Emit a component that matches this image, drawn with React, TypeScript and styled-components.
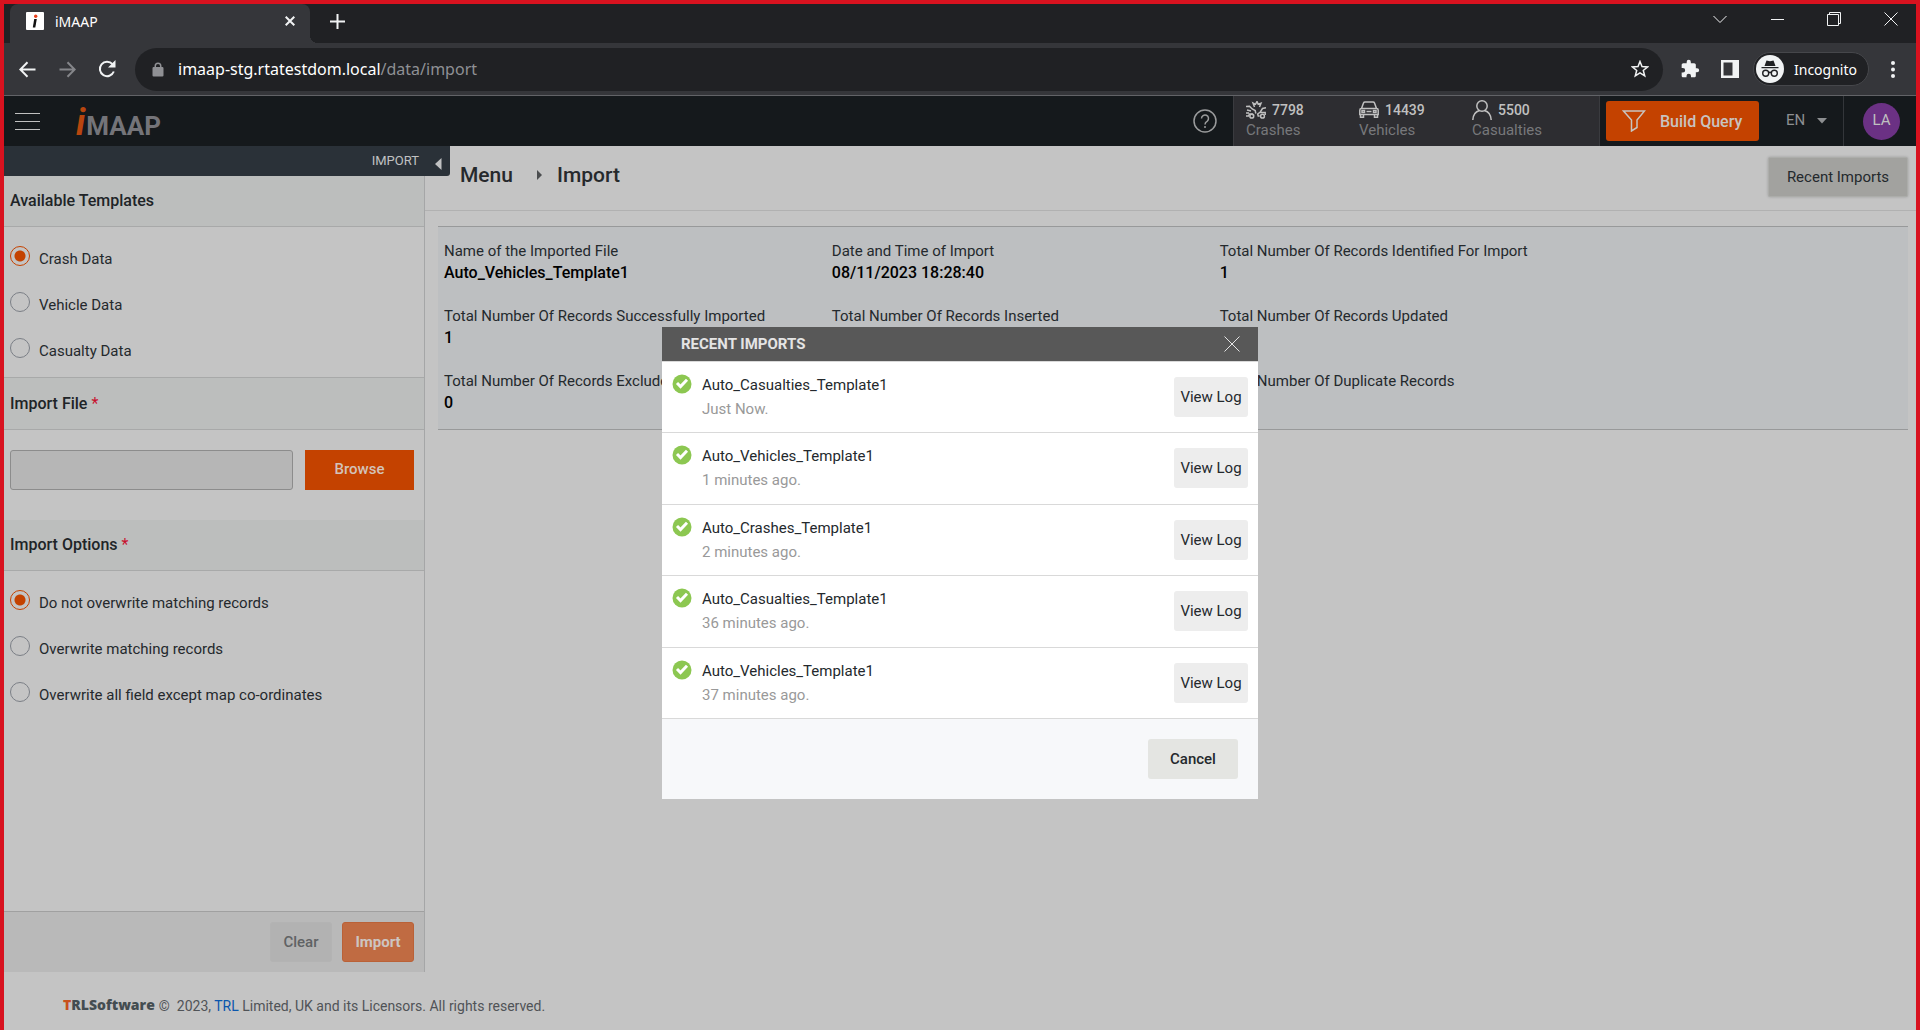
import React, { useState } from "react";
import styled, { createGlobalStyle } from "styled-components";

const GlobalStyle = createGlobalStyle`
  *, *::before, *::after { box-sizing: border-box; }
  body { margin: 0; background: #c4c4c4; }
  button, input, select { font: inherit; }
`;

const appFont = `Roboto, "Liberation Sans", sans-serif`;
const chromeFont = `"Noto Sans", "Open Sans", sans-serif`;

const Frame = styled.div`
  display: flex;
  flex-direction: column;
  height: 100vh;
  border: 4px solid #d8121f;
  border-bottom: 0;
  overflow: hidden;
  font-family: ${appFont};
  font-size: 15px;
  color: #24292d;
`;

/* ---------- Browser window ---------- */

const TabStrip = styled.div`
  display: flex;
  align-items: flex-start;
  height: 39px;
  padding-left: 6px;
  background: #202124;
  color: #fff;
  font-family: ${chromeFont};
`;

const Tab = styled.div`
  position: relative;
  display: flex;
  align-items: center;
  width: 300px;
  height: 39px;
  padding: 0 12px 5px 16px;
  border-radius: 8px 8px 0 0;
  background: #35363a;
  font-size: 14px;
  &::after {
    content: "";
    position: absolute;
    left: 100%;
    bottom: 0;
    width: 8px;
    height: 8px;
    background: radial-gradient(circle at 100% 0, transparent 8px, #35363a 8px);
  }
`;

const Favicon = styled.svg`
  width: 18px;
  height: 18px;
  margin-right: 11px;
`;

const TabTitle = styled.span`
  flex: 1;
`;

const ChromeButton = styled.button<{ $w?: number; $h?: number; $dim?: boolean }>`
  display: flex;
  align-items: center;
  justify-content: center;
  flex: none;
  width: ${(p) => p.$w ?? 40}px;
  height: ${(p) => p.$h ?? 40}px;
  padding: 0;
  border: 0;
  background: none;
  color: ${(p) => (p.$dim ? "#85868a" : "#f1f3f4")};
`;

const WindowControls = styled.div`
  display: flex;
  gap: 7px;
  margin-left: auto;
`;

const Toolbar = styled.div`
  display: flex;
  align-items: center;
  height: 53px;
  padding: 0 3px;
  border-bottom: 1px solid #626367;
  background: #35363a;
  color: #fff;
  font-family: ${chromeFont};
`;

const AddressBar = styled.div`
  display: flex;
  flex: 1;
  align-items: center;
  height: 43px;
  margin: 0 7px 0 8px;
  padding-left: 17px;
  border-radius: 22px;
  background: #202124;
  color: #8f9094;
  font-size: 16px;
`;

const Url = styled.span`
  flex: 1;
  padding-left: 14px;
  strong {
    color: #fff;
    font-weight: 400;
  }
`;

const IncognitoChip = styled.div`
  display: flex;
  align-items: center;
  gap: 10px;
  height: 34px;
  margin: 0 4px 0 3px;
  padding: 0 11px 0 2px;
  border: 1px solid #46474b;
  border-radius: 17px;
  background: #202124;
  font-size: 14px;
`;

/* ---------- Application header ---------- */

const Viewport = styled.div`
  position: relative;
  display: flex;
  flex: 1;
  flex-direction: column;
  min-height: 0;
`;

const AppHeader = styled.header`
  display: flex;
  flex: none;
  align-items: center;
  height: 50px;
  background: #15191c;
  color: #c0c0c0;
`;

const PlainButton = styled.button`
  display: flex;
  padding: 0;
  border: 0;
  background: none;
  color: inherit;
`;

const Hamburger = styled(PlainButton)`
  margin: 0 36px 0 11px;
`;

const Logo = styled.a`
  display: flex;
  align-items: baseline;
  padding-top: 6px;
  color: #747479;
  font-size: 26px;
  font-weight: 700;
  line-height: 50px;
  text-decoration: none;
  em {
    color: #b8460f;
    font-size: 36px;
    margin-right: 1px;
  }
`;

const HelpButton = styled(PlainButton)`
  margin: 0 16px 0 auto;
  color: #9a9b9c;
`;

const Stats = styled.div`
  display: flex;
  gap: 12px;
  height: 50px;
  padding: 4px 26px 0 12px;
  border-left: 1px solid #3a3b3f;
  border-right: 1px solid #3a3b3f;
  background: #2d2d31;
`;

const Stat = styled.div`
  width: 101px;
  color: #77787b;
  line-height: 20px;
`;

const StatValue = styled.div`
  display: flex;
  align-items: center;
  gap: 6px;
  height: 20px;
  color: #c0c0c0;
  font-size: 14px;
  font-weight: 500;
`;

const QueryButton = styled.button`
  display: flex;
  align-items: center;
  gap: 14px;
  width: 153px;
  height: 40px;
  margin: 0 27px 0 6px;
  padding: 0 0 0 16px;
  border: 0;
  border-radius: 3px;
  background: #c44200;
  color: #c8c4c0;
  font-size: 16px;
  font-weight: 500;
`;

const LanguagePicker = styled.label`
  display: flex;
  align-items: center;
  height: 50px;
  width: 58px;
  border-right: 1px solid #33363a;
  color: #8d8f91;
  select {
    width: 31px;
    padding: 0 0 2px;
    border: 0;
    appearance: none;
    background: none;
    color: inherit;
    font-size: 15px;
  }
`;

const Avatar = styled.button`
  width: 37px;
  height: 37px;
  margin: 0 16px 0 19px;
  padding: 0 0 2px;
  border: 0;
  border-radius: 50%;
  background: #6b3184;
  color: #c0c0c0;
  font-size: 15px;
`;

/* ---------- Sidebar ---------- */

const Body = styled.div`
  display: flex;
  flex: 1;
  min-height: 0;
`;

const Sidebar = styled.aside`
  display: flex;
  flex: none;
  flex-direction: column;
  width: 421px;
  border-right: 1px solid #a5a6a7;
`;

const SidebarTab = styled.div`
  display: flex;
  flex: none;
  justify-content: flex-end;
  gap: 16px;
  z-index: 1;
  width: calc(100% + 26px);
  height: 30px;
  padding-right: 8px;
  border-radius: 0 0 3px 0;
  background: #2a3138;
  color: #c0c1c2;
  font-size: 13px;
  line-height: 30px;
  button {
    padding-top: 12px;
  }
`;

const SectionTitle = styled.h2<{ $topRule?: boolean }>`
  flex: none;
  margin: 0;
  padding: ${(p) => (p.$topRule ? 13 : 12)}px 6px 12px;
  border-top: ${(p) => (p.$topRule ? "1px solid #a8a9a9" : "0")};
  border-bottom: 1px solid #a8a9a9;
  background: #bcbebd;
  color: #202427;
  font-size: 16px;
  font-weight: 500;
  line-height: 26px;
  span {
    color: #c8102e;
    font-weight: 400;
  }
`;

const RadioGroup = styled.div`
  display: flex;
  flex-direction: column;
  gap: 20px;
  padding: 19px 6px 13px;
`;

const RadioRow = styled.label`
  display: flex;
  align-items: flex-start;
  gap: 9px;
  line-height: 26px;
  input {
    width: 20px;
    height: 20px;
    margin: 0;
    appearance: none;
    border: 1px solid #7b7f86;
    border-radius: 50%;
  }
  input:checked {
    border-color: #c44200;
    background: radial-gradient(circle, #c44200 5px, transparent 6px);
  }
`;

const FileRow = styled.div`
  display: flex;
  gap: 12px;
  padding: 20px 10px 30px 6px;
  input {
    flex: 1;
    min-width: 0;
    height: 40px;
    border: 1px solid #8c8c8c;
    border-radius: 3px;
    background: #b6b6b6;
  }
`;

const BrowseButton = styled.button`
  width: 109px;
  height: 40px;
  padding: 0 0 3px;
  border: 0;
  background: #c44200;
  color: #d3c2b9;
  font-weight: 500;
`;

const SidebarActions = styled.div`
  display: flex;
  justify-content: flex-end;
  gap: 10px;
  margin-top: auto;
  padding: 10px;
  border-top: 1px solid #a0a0a0;
  background: #b9b9b9;
`;

const ActionButton = styled.button<{ $primary?: boolean }>`
  width: ${(p) => (p.$primary ? 72 : 62)}px;
  height: 40px;
  border: 1px solid ${(p) => (p.$primary ? "#ba6137" : "#b3b3b3")};
  border-radius: 3px;
  background: ${(p) => (p.$primary ? "#c06b42" : "#b2b2b2")};
  color: ${(p) => (p.$primary ? "#cdc5c1" : "#606264")};
  font-weight: ${(p) => (p.$primary ? 700 : 500)};
  padding: 0;
`;

/* ---------- Content ---------- */

const Main = styled.main`
  flex: 1;
  min-width: 0;
`;

const PageHead = styled.div`
  display: flex;
  align-items: flex-start;
  justify-content: space-between;
  padding: 11px 8px 13px 35px;
  border-bottom: 1px solid #b1b1b1;
`;

const Breadcrumb = styled.nav`
  display: flex;
  align-items: center;
  color: #26292c;
  font-size: 21px;
  font-weight: 500;
  line-height: 36px;
  svg {
    margin: 0 15px 0 24px;
    color: #4b4d4f;
  }
`;

const RecentButton = styled.button`
  width: 140px;
  height: 40px;
  padding: 0;
  border: 1px solid #acadaa;
  border-radius: 2px;
  background: #a2a29f;
  box-shadow: 0 0 3px rgba(0, 0, 0, 0.2);
  color: #24292d;
`;

const Summary = styled.dl`
  display: grid;
  grid-template-columns: 26.6% 26.6% 1fr;
  row-gap: 21px;
  margin: 15px 8px 0 13px;
  padding: 13px 6px 15px;
  border-top: 1px solid #98999a;
  border-bottom: 1px solid #98999a;
  background: #bdbfc1;
  line-height: 22px;
  dd {
    min-height: 22px;
    margin: 0;
    color: #000;
    font-size: 16px;
    font-weight: 500;
  }
`;

const Footer = styled.footer`
  display: flex;
  flex: none;
  align-items: center;
  gap: 4px;
  height: 58px;
  padding: 10px 0 0 59px;
  color: #505357;
  font-size: 14px;
  a {
    color: #0b56ad;
    text-decoration: none;
  }
`;

const FooterLogo = styled.span`
  color: #444d51;
  font-family: "Open Sans", sans-serif;
  font-size: 14px;
  font-weight: 800;
  line-height: 24px;
  padding-bottom: 2px;
  span {
    color: #c8501c;
  }
`;

/* ---------- Recent imports dialog ---------- */

const Backdrop = styled.div`
  position: absolute;
  inset: 0;
  z-index: 2;
  display: flex;
  align-items: center;
  justify-content: center;
`;

const Dialog = styled.section`
  width: 596px;
  background: #fff;
`;

const DialogHead = styled.header`
  display: flex;
  align-items: center;
  justify-content: space-between;
  height: 34px;
  padding: 0 18px 0 19px;
  background: #585858;
  color: #e4e4e4;
  h1 {
    margin: 0;
    font-size: 15px;
    font-weight: 700;
  }
`;

const ImportList = styled.ul`
  display: grid;
  grid-auto-rows: 1fr;
  height: 357px;
  margin: 0;
  padding: 0;
  list-style: none;
`;

const ImportItem = styled.li`
  display: flex;
  align-items: flex-start;
  padding: 11px 10px 0;
  border-top: 1px solid #d9d9d9;
  svg {
    margin: 1px 10px 0 0;
  }
  button {
    margin-top: 4px;
  }
`;

const ImportText = styled.div`
  flex: 1;
  line-height: 24px;
  p {
    margin: 0;
  }
  p + p {
    color: #999;
  }
`;

const DialogButton = styled.button<{ $strong?: boolean }>`
  width: ${(p) => (p.$strong ? 90 : 74)}px;
  height: 40px;
  padding: 0;
  border: 0;
  border-radius: 3px;
  background: ${(p) => (p.$strong ? "#e4e5e2" : "#ededed")};
  color: #24292d;
  font-weight: ${(p) => (p.$strong ? 500 : 400)};
`;

const DialogFoot = styled.footer`
  display: flex;
  justify-content: flex-end;
  padding: 20px;
  border-top: 1px solid #d9d9d9;
  background: #f7f8fa;
`;

/* ---------- Icons ---------- */

type StrokeProps = { w: number; h?: number; box?: string; sw?: number; children: React.ReactNode };

const Stroke = ({ w, h = w, box, sw = 1, children }: StrokeProps) => (
  <svg
    width={w}
    height={h}
    viewBox={box ?? `0 0 ${w} ${h}`}
    fill="none"
    stroke="currentColor"
    strokeWidth={sw}
    aria-hidden="true"
  >
    {children}
  </svg>
);

const Solid = ({ w, h = w, box, children }: StrokeProps) => (
  <svg width={w} height={h} viewBox={box ?? `0 0 ${w} ${h}`} fill="currentColor" aria-hidden="true">
    {children}
  </svg>
);

const CrashIcon = () => (
  <Stroke w={20} h={18} sw={1.5}>
    <path d="M8.500 6L7 2l2.500 1.300L11 .5l1.200 2.700L15 2.200 13.500 6M0 5.500l3.500-.3 2.700 2.800 3 1.500.6 3M1 9l4 1M0 12h3M0 15h2.500l1-2h3l1.500 1.500M20 6.800l-3.500.7-2.200 3.500-2.600 2 .5 2h1.500M14 11.500h5.200v2.500" />
    <circle cx="5.800" cy="15.200" r="1.900" />
    <circle cx="16.500" cy="15.200" r="1.900" />
  </Stroke>
);

const CarIcon = () => (
  <Stroke w={20} h={18} sw={1.5}>
    <path d="M2.500 7.500L4.500 2q.4-1 1.500-1h8q1.100 0 1.500 1l2 5.500M2.500 7.500h15q1.700 0 1.700 1.700v4.300H.8V9.200q0-1.700 1.700-1.700zM1.500 13.500v2.800h3v-2.800M15.500 13.500v2.800h3v-2.800M7.500 10.500h5" />
    <rect x="3" y="9.500" width="2.500" height="2" />
    <rect x="14.500" y="9.500" width="2.500" height="2" />
  </Stroke>
);

const PersonIcon = () => (
  <Stroke w={20} h={20} sw={1.5}>
    <circle cx="10" cy="6" r="5.200" />
    <path d="M.8 20c.3-5 3-8.500 6.700-9.500M19.200 20c-.3-5-3-8.500-6.700-9.500" />
  </Stroke>
);

const CheckIcon = () => (
  <svg width="20" height="20" viewBox="0 0 20 20" aria-hidden="true">
    <circle cx="10" cy="10" r="9.500" fill="#8cc751" />
    <path d="M5 9l3.500 3.500L15 5.800" fill="none" stroke="#fff" strokeWidth="3" />
  </svg>
);

/* ---------- Data ---------- */

const templates = ["Crash Data", "Vehicle Data", "Casualty Data"];
const overwriteModes = [
  "Do not overwrite matching records",
  "Overwrite matching records",
  "Overwrite all field except map co-ordinates",
];

const stats = [
  { label: "Crashes", value: "7798", icon: <CrashIcon /> },
  { label: "Vehicles", value: "14439", icon: <CarIcon /> },
  { label: "Casualties", value: "5500", icon: <PersonIcon /> },
];

const summary = [
  ["Name of the Imported File", "Auto_Vehicles_Template1"],
  ["Date and Time of Import", "08/11/2023 18:28:40"],
  ["Total Number Of Records Identified For Import", "1"],
  ["Total Number Of Records Successfully Imported", "1"],
  ["Total Number Of Records Inserted", ""],
  ["Total Number Of Records Updated", ""],
  ["Total Number Of Records Excluded", "0"],
  ["", ""],
  ["Total Number Of Duplicate Records", ""],
];

const recent = [
  ["Auto_Casualties_Template1", "Just Now."],
  ["Auto_Vehicles_Template1", "1 minutes ago."],
  ["Auto_Crashes_Template1", "2 minutes ago."],
  ["Auto_Casualties_Template1", "36 minutes ago."],
  ["Auto_Vehicles_Template1", "37 minutes ago."],
];

/* ---------- Page ---------- */

const Browser = () => (
  <>
    <TabStrip>
      <Tab>
        <Favicon viewBox="0 0 18 18" aria-hidden="true">
          <rect width="18" height="18" rx="1" fill="#fff" />
          <circle cx="9.700" cy="4.200" r="1.700" fill="#e8401c" />
          <path d="M8.200 7h2.600L9.300 15.500H6.800z" fill="#111" />
        </Favicon>
        <TabTitle>iMAAP</TabTitle>
        <ChromeButton $w={16} $h={16} aria-label="Close tab">
          <Stroke w={10} sw={2}>
            <path d="M.7.7l8.600 8.600M9.300.7L.7 9.300" />
          </Stroke>
        </ChromeButton>
      </Tab>
      <ChromeButton $w={55} $h={34} aria-label="New tab">
        <Stroke w={15} sw={2}>
          <path d="M7.500 0v15M0 7.500h15" />
        </Stroke>
      </ChromeButton>
      <WindowControls>
        <ChromeButton $w={50} $h={30} aria-label="Search tabs">
          <Stroke w={14} h={9}>
            <path d="M.5 1L7 7.500 13.500 1" />
          </Stroke>
        </ChromeButton>
        <ChromeButton $w={50} $h={30} aria-label="Minimize">
          <Stroke w={13} h={1}>
            <path d="M0 .5h13" />
          </Stroke>
        </ChromeButton>
        <ChromeButton $w={50} $h={30} aria-label="Restore">
          <Stroke w={14}>
            <path d="M.5 2.500h11v11H.5zM2.500 2.500v-2h11v11h-2" />
          </Stroke>
        </ChromeButton>
        <ChromeButton $w={50} $h={30} aria-label="Close window">
          <Stroke w={14}>
            <path d="M.5.5l13 13M13.500.5l-13 13" />
          </Stroke>
        </ChromeButton>
      </WindowControls>
    </TabStrip>
    <Toolbar>
      <ChromeButton aria-label="Back">
        <Stroke w={17} sw={2}>
          <path d="M16.500 8.500H1.500M8.500 1.200L1.300 8.500l7.200 7.300" />
        </Stroke>
      </ChromeButton>
      <ChromeButton $dim aria-label="Forward">
        <Stroke w={17} sw={2}>
          <path d="M.5 8.500h15M8.500 1.200l7.200 7.300-7.200 7.300" />
        </Stroke>
      </ChromeButton>
      <ChromeButton aria-label="Reload">
        <Stroke w={18} sw={2}>
          <path d="M15.800 11.500A7.200 7.200 0 1 1 14.500 4.200" />
          <path d="M17.500 0v7.500H10z" fill="currentColor" stroke="none" />
        </Stroke>
      </ChromeButton>
      <AddressBar>
        <Solid w={12} h={15}>
          <path d="M2.500 5V4a3.500 3.500 0 0 1 7 0v1h.8q1.200 0 1.200 1.200v7.300q0 1-1.200 1H1.700q-1.200 0-1.200-1V6.200Q.5 5 1.700 5zM4 5h4V4a2 2 0 0 0-4 0z" />
        </Solid>
        <Url>
          <strong>imaap-stg.rtatestdom.local</strong>/data/import
        </Url>
        <ChromeButton $w={46} aria-label="Bookmark">
          <Stroke w={18} sw={1.5}>
            <path d="M9 1.500l2 5.100 5.500.4-4.200 3.500 1.400 5.300L9 12.900l-4.700 2.900 1.400-5.300L1.500 7 7 6.600z" />
          </Stroke>
        </ChromeButton>
      </AddressBar>
      <ChromeButton aria-label="Extensions">
        <Solid w={20} box="0 0 24 24">
          <path d="M20.500 11H19V7c0-1.100-.9-2-2-2h-4V3.500a2.500 2.500 0 0 0-5 0V5H4c-1.100 0-2 .9-2 2v3.800h1.500a2.700 2.700 0 0 1 0 5.400H2V20c0 1.100.9 2 2 2h3.800v-1.500a2.700 2.700 0 0 1 5.400 0V22H17c1.100 0 2-.9 2-2v-4h1.500a2.500 2.500 0 0 0 0-5z" />
        </Solid>
      </ChromeButton>
      <ChromeButton aria-label="Side panel">
        <Solid w={18}>
          <path d="M0 0h18v18H0zM2.500 2.500v13h9v-13z" fillRule="evenodd" />
        </Solid>
      </ChromeButton>
      <IncognitoChip>
        <svg width="28" height="28" viewBox="0 0 28 28" aria-hidden="true">
          <circle cx="14" cy="14" r="14" fill="#f1f3f4" />
          <path d="M10.500 5.500l3.500.8 3.500-.8 2 5.500h-11zM5.500 12h17v1.300h-17z" fill="#202124" />
          <g fill="none" stroke="#202124" strokeWidth="1.400">
            <circle cx="9.700" cy="18.200" r="3" />
            <circle cx="18.300" cy="18.200" r="3" />
            <path d="M12.500 17.800q1.500-1 3 0" />
          </g>
        </svg>
        Incognito
      </IncognitoChip>
      <ChromeButton aria-label="Menu">
        <Solid w={4} h={17}>
          <circle cx="2" cy="2" r="2" />
          <circle cx="2" cy="8.500" r="2" />
          <circle cx="2" cy="15" r="2" />
        </Solid>
      </ChromeButton>
    </Toolbar>
  </>
);

const Header = () => (
  <AppHeader>
    <Hamburger aria-label="Open menu">
      <Stroke w={25} h={17}>
        <path d="M0 .5h25M0 8.500h25M0 16.500h25" />
      </Stroke>
    </Hamburger>
    <Logo href="#">
      <em>i</em>MAAP
    </Logo>
    <HelpButton aria-label="Help">
      <Stroke w={24} sw={1.5}>
        <circle cx="12" cy="12" r="11" />
        <path d="M8.500 9.500a3.500 3.500 0 1 1 5.800 2.600Q12 13.500 12 15.500M12 17v2" />
      </Stroke>
    </HelpButton>
    <Stats>
      {stats.map((s) => (
        <Stat key={s.label}>
          <StatValue>
            {s.icon}
            {s.value}
          </StatValue>
          {s.label}
        </Stat>
      ))}
    </Stats>
    <QueryButton>
      <Stroke w={24} h={22} sw={1.5}>
        <path d="M1.500 1h21l-7.500 9v7.500L9.500 21V10z" />
      </Stroke>
      Build Query
    </QueryButton>
    <LanguagePicker>
      <select aria-label="Language" defaultValue="EN">
        <option>EN</option>
      </select>
      <Solid w={10} h={6}>
        <path d="M0 0h10L5 5.500z" />
      </Solid>
    </LanguagePicker>
    <Avatar aria-label="Account">LA</Avatar>
  </AppHeader>
);

type RadiosProps = { name: string; options: string[] };

const Radios = ({ name, options }: RadiosProps) => {
  const [picked, setPicked] = useState(options[0]);
  return (
    <RadioGroup role="radiogroup" aria-label={name}>
      {options.map((o) => (
        <RadioRow key={o}>
          <input type="radio" name={name} checked={picked === o} onChange={() => setPicked(o)} />
          {o}
        </RadioRow>
      ))}
    </RadioGroup>
  );
};

export default function App() {
  const [open, setOpen] = useState(true);
  return (
    <Frame>
      <GlobalStyle />
      <Browser />
      <Viewport>
        <Header />
        <Body>
          <Sidebar>
            <SidebarTab>
              IMPORT
              <PlainButton aria-label="Collapse panel">
                <Solid w={7} h={12}>
                  <path d="M6.500 0v12L0 6z" />
                </Solid>
              </PlainButton>
            </SidebarTab>
            <SectionTitle>Available Templates</SectionTitle>
            <Radios name="template" options={templates} />
            <SectionTitle $topRule>
              Import File <span>*</span>
            </SectionTitle>
            <FileRow>
              <input type="text" aria-label="Import File" readOnly />
              <BrowseButton>Browse</BrowseButton>
            </FileRow>
            <SectionTitle>
              Import Options <span>*</span>
            </SectionTitle>
            <Radios name="overwrite" options={overwriteModes} />
            <SidebarActions>
              <ActionButton>Clear</ActionButton>
              <ActionButton $primary>Import</ActionButton>
            </SidebarActions>
          </Sidebar>
          <Main>
            <PageHead>
              <Breadcrumb>
                Menu
                <Solid w={5} h={10}>
                  <path d="M0 0l5 5-5 5z" />
                </Solid>
                Import
              </Breadcrumb>
              <RecentButton onClick={() => setOpen(true)}>Recent Imports</RecentButton>
            </PageHead>
            <Summary>
              {summary.map(([label, value], i) => (
                <div key={i}>
                  <dt>{label}</dt>
                  <dd>{value}</dd>
                </div>
              ))}
            </Summary>
          </Main>
        </Body>
        <Footer>
          <FooterLogo>
            <span>T</span>RLSoftware
          </FooterLogo>
          <div>
            ©&nbsp; 2023, <a href="#">TRL</a> Limited, UK and its Licensors. All rights reserved.
          </div>
        </Footer>
        {open && (
          <Backdrop>
            <Dialog role="dialog" aria-labelledby="recent-title">
              <DialogHead>
                <h1 id="recent-title">RECENT IMPORTS</h1>
                <PlainButton aria-label="Close" onClick={() => setOpen(false)}>
                  <Stroke w={16}>
                    <path d="M.5.5l15 15M15.500.5l-15 15" />
                  </Stroke>
                </PlainButton>
              </DialogHead>
              <ImportList>
                {recent.map(([name, when]) => (
                  <ImportItem key={when}>
                    <CheckIcon />
                    <ImportText>
                      <p>{name}</p>
                      <p>{when}</p>
                    </ImportText>
                    <DialogButton>View Log</DialogButton>
                  </ImportItem>
                ))}
              </ImportList>
              <DialogFoot>
                <DialogButton $strong onClick={() => setOpen(false)}>
                  Cancel
                </DialogButton>
              </DialogFoot>
            </Dialog>
          </Backdrop>
        )}
      </Viewport>
    </Frame>
  );
}
